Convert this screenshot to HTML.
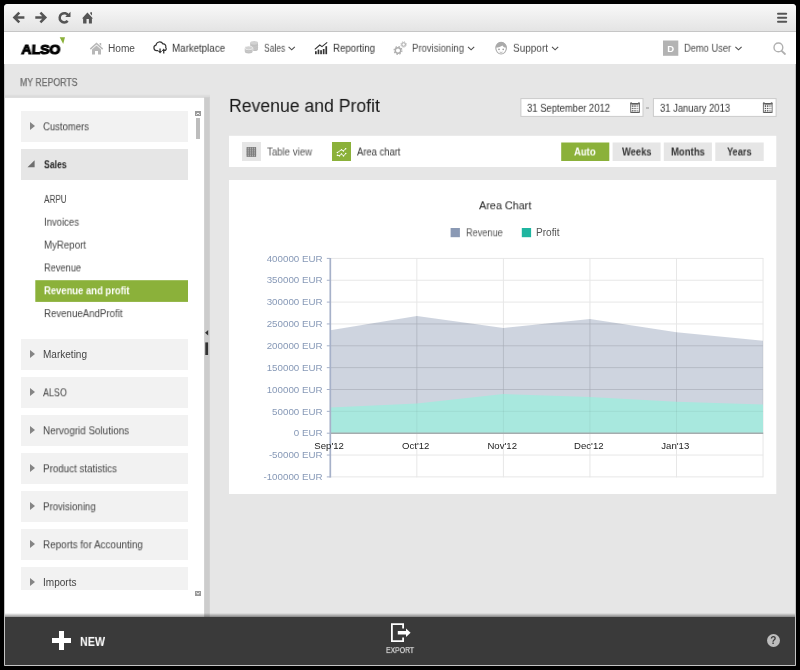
<!DOCTYPE html>
<html>
<head>
<meta charset="utf-8">
<title>Revenue and Profit</title>
<style>
*{box-sizing:border-box;margin:0;padding:0}
html,body{width:800px;height:670px;overflow:hidden;background:#000;font-family:"Liberation Sans",sans-serif;}
.abs{position:absolute}
svg text{font-family:"Liberation Sans",sans-serif}
.t{will-change:transform;position:absolute;white-space:nowrap;line-height:20px;height:20px;transform-origin:0 50%}
#bg{position:absolute;left:4px;top:4px;width:792px;height:662px;background:#e6e6e6;border-radius:3.5px 3.5px 0 0;border:1px solid #c4c4c4}
#chrome{position:absolute;left:4px;top:4px;width:792px;height:28px;background:linear-gradient(#f8f8f8,#e4e4e4);border-bottom:1px solid #c6c6c6;border-radius:3.5px 3.5px 0 0}
#nav{position:absolute;left:4px;top:32px;width:792px;height:32px;background:#fff}
#side{position:absolute;left:5px;top:97.7px;width:199.2px;height:519.3px;background:#fff}
#split{position:absolute;left:204.2px;top:97.7px;width:5.6px;height:519.3px;background:#ccc}
.it{position:absolute;left:21px;width:167px;height:31px;background:#f2f2f2}
.it:before{content:"";position:absolute;left:9.2px;top:11.1px;border-left:5px solid #858585;border-top:4.5px solid transparent;border-bottom:4.5px solid transparent}
#foot{position:absolute;left:5px;top:617px;width:790px;height:48px;background:#3a3a3a}
.btn{position:absolute;top:142.4px;height:18.6px;width:48.1px;background:#e6e6e6}
.date{position:absolute;top:98px;height:18.7px;background:#fff;border:1px solid #cdcdcd}
</style>
</head>
<body>
<div id="bg"></div>
<div id="chrome"></div>
<div id="nav"></div>
<!-- chrome icons -->
<svg class="abs" style="left:4px;top:4px" width="792" height="28" viewBox="4 4 792 28">
 <g stroke="#555" stroke-width="2.5" fill="none" stroke-linecap="butt" stroke-linejoin="miter">
  <path d="M24.4 17.5 H15 M19.3 12.6 L14.4 17.5 L19.3 22.4"/>
  <path d="M35.3 17.5 H44.6 M40.4 12.6 L45.3 17.5 L40.4 22.4"/>
  <path d="M68.3 15.6 A4.6 4.6 0 1 0 67.7 20.9"/>
 </g>
 <path d="M70.5 11.8 V16.9 H65.2 Z" fill="#555"/>
 <path d="M87.4 12.4 L93 18.5 H91.9 V23.6 H88.9 V19 H86.5 V23.6 H83.1 V18.5 H82 Z M90.3 12.3 H92 V15.6 L90.3 13.8 Z" fill="#555"/>
 <g stroke="#555" stroke-width="2" stroke-linecap="round">
  <path d="M778 13.75 H786.2 M778 17.75 H786.2 M778 21.75 H786.2"/>
 </g>
</svg>
<!-- logo -->
<div class="abs" style="left:21.2px;top:40.6px;font-size:13.6px;font-weight:bold;color:#000;line-height:18px;-webkit-text-stroke:1.1px #000;transform:skewX(-3deg) scaleX(1.03);transform-origin:0 100%;letter-spacing:0px;will-change:transform">ALSO</div>
<svg class="abs" style="left:59px;top:37px" width="7" height="8" viewBox="0 0 7 8"><path d="M0.7 0.2 H6 L4.2 7 Z" fill="#8bb13a"/></svg>
<!-- nav icons -->
<svg class="abs" style="left:4px;top:32px" width="792" height="32" viewBox="4 32 792 32">
 <!-- home -->
 <path d="M96.5 42.6 L103.2 48.6 L102.2 49.7 L96.5 44.6 L90.8 49.7 L89.8 48.6 Z M92 49.4 L96.5 45.4 L101 49.4 V54.5 H98 V51 H95 V54.5 H92 Z M99.6 43 H101.2 V46 L99.6 44.6 Z" fill="#b8b8b8"/>
 <!-- cloud -->
 <path d="M157.9 50.6 H156.6 A2.8 2.8 0 0 1 156 45.1 A3.7 3.7 0 0 1 162.9 43.9 A2.6 2.6 0 0 1 165.7 47.4 A2 2 0 0 1 165.5 50.3" fill="none" stroke="#333" stroke-width="1.2" stroke-linecap="round"/>
 <path d="M159.4 48.4 H160.7 V51 H162.1 L160.05 53.5 L158 51 H159.4 Z M163.1 53.5 V51 H161.7 L163.75 48.5 L165.8 51 H164.4 V53.5 Z" fill="#333"/>
 <!-- coins -->
 <path d="M250.2 42.8 V49.2 A3.9 1.9 0 0 0 258 49.2 V42.8 Z" fill="#c0c0c0"/>
 <ellipse cx="254.1" cy="42.8" rx="3.9" ry="1.9" fill="#d2d2d2"/>
 <path d="M250.2 45.4 A3.9 1.9 0 0 0 258 45.4 M250.2 47.4 A3.9 1.9 0 0 0 258 47.4" stroke="#d0d0d0" stroke-width="0.5" fill="none"/>
 <path d="M244.2 47.8 V51.6 A4.4 2.1 0 0 0 253.2 51.6 V47.8 Z" fill="#fff"/>
 <path d="M244.8 47.9 V51.6 A3.9 1.9 0 0 0 252.6 51.6 V47.9 Z" fill="#c0c0c0"/>
 <ellipse cx="248.7" cy="47.9" rx="3.9" ry="1.9" fill="#d2d2d2" stroke="#fff" stroke-width="0.5"/>
 <path d="M244.8 49.8 A3.9 1.9 0 0 0 252.6 49.8" stroke="#d0d0d0" stroke-width="0.5" fill="none"/>
 <!-- reporting -->
 <g fill="#333">
  <rect x="315" y="51.2" width="1.7" height="3"/><rect x="317.6" y="49.6" width="1.7" height="4.6"/><rect x="320.2" y="50.2" width="1.7" height="4"/><rect x="322.8" y="49" width="1.7" height="5.2"/><rect x="325.4" y="46.2" width="1.7" height="8"/>
 </g>
 <path d="M314.8 49.4 L319.8 45 L322 46.6 L327.2 42.4" stroke="#333" stroke-width="1.1" fill="none"/>
 <!-- gears -->
 <g fill="none" stroke="#adadad">
  <circle cx="398" cy="50.5" r="2.7" stroke-width="1.4"/>
  <circle cx="398" cy="50.5" r="3.9" stroke-width="1.2" stroke-dasharray="1.53 1.53"/>
  <circle cx="403.6" cy="44.5" r="1.8" stroke-width="1.1"/>
  <circle cx="403.6" cy="44.5" r="2.7" stroke-width="0.9" stroke-dasharray="1.06 1.06"/>
 </g>
 <!-- support -->
 <path d="M495.8 48 A5.3 5.6 0 0 1 506.4 48 A5.3 6 0 0 1 495.8 48 Z" fill="#fff" stroke="#aaa" stroke-width="1.1"/>
 <path d="M495.6 47.6 A5.5 5.6 0 0 1 506.6 47.6 L506 47.6 C504 47.4 503 46.4 502.4 45.4 C501 46.6 498.6 47.4 495.6 47.6 Z" fill="#aaa"/>
 <circle cx="499" cy="49.4" r="0.8" fill="#999"/><circle cx="503.2" cy="49.4" r="0.8" fill="#999"/>
 <path d="M499.6 52 Q501.1 53 502.6 52" stroke="#aaa" stroke-width="0.8" fill="none"/>
 <!-- chevrons -->
 <g fill="none" stroke="#505050" stroke-width="1.15">
  <path d="M288.6 46.8 L291.7 49.8 L294.8 46.8"/>
  <path d="M468 46.8 L471.1 49.8 L474.2 46.8"/>
  <path d="M552 46.8 L555.1 49.8 L558.2 46.8"/>
  <path d="M735.4 46.8 L738.5 49.8 L741.6 46.8"/>
 </g>
 <!-- user -->
 <rect x="663" y="40.5" width="15.3" height="15.3" fill="#b3b3b3"/>
 <!-- search -->
 <circle cx="778.4" cy="47.4" r="4.4" fill="none" stroke="#b0b0b0" stroke-width="1.4"/>
 <path d="M781.6 50.8 L785 54" stroke="#b0b0b0" stroke-width="1.8" stroke-linecap="round"/>
</svg>
<div class="abs" style="left:663px;top:40.5px;width:15.3px;height:15.3px;line-height:15.3px;text-align:center;color:#fff;font-weight:bold;font-size:9.5px">D</div>

<svg class="abs" style="left:0;top:0" width="800" height="670" viewBox="0 0 800 670">
<rect x="5" y="97.7" width="199.2" height="519.3" fill="#fff" />
<rect x="204.2" y="97.7" width="5.6" height="519.3" fill="#ccc" />
<rect x="35.3" y="280.2" width="152.7" height="21.7" fill="#8bb13a" />
<rect x="205.3" y="342.4" width="2.8" height="12.6" fill="#333" />
<rect x="520.9" y="98.6" width="122.1" height="17.8" fill="#fff" stroke="#cbcbcb" stroke-width="1"/>
<rect x="653.4" y="98.6" width="122.7" height="17.8" fill="#fff" stroke="#cbcbcb" stroke-width="1"/>
<rect x="229" y="135.8" width="547.3" height="31.2" fill="#fff" />
<rect x="242" y="142" width="19" height="19" fill="#e6e6e6" />
<rect x="332" y="142" width="19" height="19" fill="#8bb13a" />
<rect x="561.2" y="142.5" width="48.1" height="18.5" fill="#8bb13a" />
<rect x="612.6" y="142.5" width="48.0" height="18.5" fill="#e6e6e6" />
<rect x="663.8" y="142.5" width="48.1" height="18.5" fill="#e6e6e6" />
<rect x="715.3" y="142.5" width="48.4" height="18.5" fill="#e6e6e6" />
<rect x="229" y="180" width="547.3" height="314" fill="#fff" />
<rect x="450.6" y="228" width="9.3" height="9.2" fill="#8a99b4" />
<rect x="521.8" y="228" width="9.3" height="9.2" fill="#1fb5a0" />
</svg>
<!-- sidebar items -->
<div class="it" style="top:111px"></div>
<div class="abs" style="left:21px;top:149px;width:167px;height:31px;background:#e6e6e6"></div>
<svg class="abs" style="left:27px;top:160px" width="8" height="8" viewBox="0 0 8 8"><path d="M7.6 0.3 V7.2 H0.5 Z" fill="#6e6e6e"/></svg>
<div class="it" style="top:339px"></div>
<div class="it" style="top:377px"></div>
<div class="it" style="top:415px"></div>
<div class="it" style="top:453px"></div>
<div class="it" style="top:491px"></div>
<div class="it" style="top:529px"></div>
<div class="it" style="top:567px;height:23px"></div>
<!-- scrollbar -->
<div class="abs" style="left:195px;top:111px;width:6px;height:5px;background:#999"></div>
<svg class="abs" style="left:195px;top:111px" width="6" height="5" viewBox="0 0 6 5"><path d="M1.2 3.6 L3 2 L4.8 3.6" stroke="#fff" stroke-width="1" fill="none"/></svg>
<div class="abs" style="left:196px;top:118px;width:4px;height:21px;background:#bdbdbd"></div>
<div class="abs" style="left:195px;top:591px;width:6px;height:5px;background:#999"></div>
<svg class="abs" style="left:195px;top:591px" width="6" height="5" viewBox="0 0 6 5"><path d="M1.2 1.6 L3 3.2 L4.8 1.6" stroke="#fff" stroke-width="1" fill="none"/></svg>
<!-- splitter handle -->
<svg class="abs" style="left:205px;top:330px" width="4" height="6" viewBox="0 0 4 6"><path d="M3.2 0 L3.2 5.4 L0 2.7 Z" fill="#333"/></svg>

<!-- main -->
<div class="abs" style="left:646.3px;top:107.2px;width:2.8px;height:1.5px;background:#bcbcbc"></div>
<!-- toolbar -->
<!-- chart panel -->
<svg class="abs" style="left:229px;top:180px" width="547" height="314" viewBox="229 180 547 314">
<path d="M330 258.40 H763.2" stroke="#e7e7e7" stroke-width="1"/>
<path d="M330 280.25 H763.2" stroke="#e7e7e7" stroke-width="1"/>
<path d="M330 302.10 H763.2" stroke="#e7e7e7" stroke-width="1"/>
<path d="M330 323.95 H763.2" stroke="#e7e7e7" stroke-width="1"/>
<path d="M330 345.80 H763.2" stroke="#e7e7e7" stroke-width="1"/>
<path d="M330 367.65 H763.2" stroke="#e7e7e7" stroke-width="1"/>
<path d="M330 389.50 H763.2" stroke="#e7e7e7" stroke-width="1"/>
<path d="M330 411.35 H763.2" stroke="#e7e7e7" stroke-width="1"/>
<path d="M330 433.20 H763.2" stroke="#e7e7e7" stroke-width="1"/>
<path d="M330 455.05 H763.2" stroke="#e7e7e7" stroke-width="1"/>
<path d="M330 476.90 H763.2" stroke="#e7e7e7" stroke-width="1"/>
<path d="M416.85 258 V477.3" stroke="#e7e7e7" stroke-width="1"/>
<path d="M503.40 258 V477.3" stroke="#e7e7e7" stroke-width="1"/>
<path d="M589.95 258 V477.3" stroke="#e7e7e7" stroke-width="1"/>
<path d="M676.50 258 V477.3" stroke="#e7e7e7" stroke-width="1"/>
<path d="M763.05 258 V477.3" stroke="#e7e7e7" stroke-width="1"/>
<clipPath id="rc"><polygon points="330.3,330.3 416.9,316.1 503.4,327.9 590.0,319.1 676.5,332.3 763.0,340.8 763.0,433.2 330.3,433.2"/></clipPath>
<polygon points="330.3,330.3 416.9,316.1 503.4,327.9 590.0,319.1 676.5,332.3 763.0,340.8 763.0,433.2 330.3,433.2" fill="#8494b0" fill-opacity="0.4"/>
<polygon points="330.3,407.4 416.9,403.5 503.4,394.1 590.0,397.1 676.5,401.7 763.0,404.4 763.0,433.2 330.3,433.2" fill="#a8e8de"/>
<g clip-path="url(#rc)">
<path d="M330 323.95 H763.2" stroke="#000" stroke-opacity="0.05" stroke-width="1"/>
<path d="M330 345.80 H763.2" stroke="#000" stroke-opacity="0.05" stroke-width="1"/>
<path d="M330 367.65 H763.2" stroke="#000" stroke-opacity="0.05" stroke-width="1"/>
<path d="M330 389.50 H763.2" stroke="#000" stroke-opacity="0.05" stroke-width="1"/>
<path d="M330 411.35 H763.2" stroke="#000" stroke-opacity="0.05" stroke-width="1"/>
<path d="M416.85 300 V433" stroke="#000" stroke-opacity="0.05" stroke-width="1"/>
<path d="M503.40 300 V433" stroke="#000" stroke-opacity="0.05" stroke-width="1"/>
<path d="M589.95 300 V433" stroke="#000" stroke-opacity="0.05" stroke-width="1"/>
<path d="M676.50 300 V433" stroke="#000" stroke-opacity="0.05" stroke-width="1"/>
</g>
<path d="M330 433.20 H763.2" stroke="#a5acae" stroke-width="1.4"/>
<path d="M330.3 258 V477.6" stroke="#a6b1c9" stroke-width="1.7"/>
<path d="M326.8 258.40 H330" stroke="#a6b1c9" stroke-width="1"/>
<path d="M326.8 280.25 H330" stroke="#a6b1c9" stroke-width="1"/>
<path d="M326.8 302.10 H330" stroke="#a6b1c9" stroke-width="1"/>
<path d="M326.8 323.95 H330" stroke="#a6b1c9" stroke-width="1"/>
<path d="M326.8 345.80 H330" stroke="#a6b1c9" stroke-width="1"/>
<path d="M326.8 367.65 H330" stroke="#a6b1c9" stroke-width="1"/>
<path d="M326.8 389.50 H330" stroke="#a6b1c9" stroke-width="1"/>
<path d="M326.8 411.35 H330" stroke="#a6b1c9" stroke-width="1"/>
<path d="M326.8 433.20 H330" stroke="#a6b1c9" stroke-width="1"/>
<path d="M326.8 455.05 H330" stroke="#a6b1c9" stroke-width="1"/>
<path d="M326.8 476.90 H330" stroke="#a6b1c9" stroke-width="1"/>
<text transform="translate(322.5,261.6) scale(0.975,0.97)" text-anchor="end" font-size="10" fill="#8799b7">400000 EUR</text>
<text transform="translate(322.5,283.4) scale(0.975,0.97)" text-anchor="end" font-size="10" fill="#8799b7">350000 EUR</text>
<text transform="translate(322.5,305.3) scale(0.975,0.97)" text-anchor="end" font-size="10" fill="#8799b7">300000 EUR</text>
<text transform="translate(322.5,327.1) scale(0.975,0.97)" text-anchor="end" font-size="10" fill="#8799b7">250000 EUR</text>
<text transform="translate(322.5,349.0) scale(0.975,0.97)" text-anchor="end" font-size="10" fill="#8799b7">200000 EUR</text>
<text transform="translate(322.5,370.8) scale(0.975,0.97)" text-anchor="end" font-size="10" fill="#8799b7">150000 EUR</text>
<text transform="translate(322.5,392.7) scale(0.975,0.97)" text-anchor="end" font-size="10" fill="#8799b7">100000 EUR</text>
<text transform="translate(322.5,414.6) scale(0.975,0.97)" text-anchor="end" font-size="10" fill="#8799b7">50000 EUR</text>
<text transform="translate(322.5,436.4) scale(0.975,0.97)" text-anchor="end" font-size="10" fill="#8799b7">0 EUR</text>
<text transform="translate(322.5,458.2) scale(0.975,0.97)" text-anchor="end" font-size="10" fill="#8799b7">-50000 EUR</text>
<text transform="translate(322.5,480.1) scale(0.975,0.97)" text-anchor="end" font-size="10" fill="#8799b7">-100000 EUR</text>
<text transform="translate(329.1,449.2) scale(0.96,0.98)" text-anchor="middle" font-size="10" fill="#222">Sep'12</text>
<text transform="translate(415.7,449.2) scale(0.96,0.98)" text-anchor="middle" font-size="10" fill="#222">Oct'12</text>
<text transform="translate(502.2,449.2) scale(0.96,0.98)" text-anchor="middle" font-size="10" fill="#222">Nov'12</text>
<text transform="translate(588.8,449.2) scale(0.96,0.98)" text-anchor="middle" font-size="10" fill="#222">Dec'12</text>
<text transform="translate(675.3,449.2) scale(0.96,0.98)" text-anchor="middle" font-size="10" fill="#222">Jan'13</text>
</svg>
<svg class="abs" style="left:229px;top:96px" width="550" height="70" viewBox="229 96 550 70">
<g transform="translate(630.2,102)"><rect x="0.5" y="1.6" width="8.7" height="8.8" fill="#e4e4e4" stroke="#6e6e6e" stroke-width="1"/><rect x="0" y="0.2" width="1.9" height="2.2" rx="0.8" fill="#666"/><rect x="7.8" y="0.2" width="1.9" height="2.2" rx="0.8" fill="#666"/><path d="M1.8 1.9 H7.9" stroke="#555" stroke-width="1.3"/><path d="M1 10.4 H8.7" stroke="#555" stroke-width="0.9"/><path d="M3.7 3 V10 M5.9 3 V10 M1 5.4 H8.7 M1 7.6 H8.7" stroke="#fff" stroke-width="0.8"/><rect x="2.0" y="3.3" width="1.2" height="1.6" fill="#555"/><rect x="2.0" y="5.9" width="1.2" height="1.2" fill="#555"/><rect x="2.0" y="8.1" width="1.2" height="1.2" fill="#555"/><rect x="4.2" y="3.3" width="1.2" height="1.6" fill="#555"/><rect x="4.2" y="5.9" width="1.2" height="1.2" fill="#555"/><rect x="4.2" y="8.1" width="1.2" height="1.2" fill="#555"/><rect x="6.4" y="3.3" width="1.2" height="1.6" fill="#999"/><rect x="6.4" y="5.9" width="1.2" height="1.2" fill="#999"/><rect x="6.4" y="8.1" width="1.2" height="1.2" fill="#999"/></g><g transform="translate(762.9,102)"><rect x="0.5" y="1.6" width="8.7" height="8.8" fill="#e4e4e4" stroke="#6e6e6e" stroke-width="1"/><rect x="0" y="0.2" width="1.9" height="2.2" rx="0.8" fill="#666"/><rect x="7.8" y="0.2" width="1.9" height="2.2" rx="0.8" fill="#666"/><path d="M1.8 1.9 H7.9" stroke="#555" stroke-width="1.3"/><path d="M1 10.4 H8.7" stroke="#555" stroke-width="0.9"/><path d="M3.7 3 V10 M5.9 3 V10 M1 5.4 H8.7 M1 7.6 H8.7" stroke="#fff" stroke-width="0.8"/><rect x="2.0" y="3.3" width="1.2" height="1.6" fill="#555"/><rect x="2.0" y="5.9" width="1.2" height="1.2" fill="#555"/><rect x="2.0" y="8.1" width="1.2" height="1.2" fill="#555"/><rect x="4.2" y="3.3" width="1.2" height="1.6" fill="#555"/><rect x="4.2" y="5.9" width="1.2" height="1.2" fill="#555"/><rect x="4.2" y="8.1" width="1.2" height="1.2" fill="#555"/><rect x="6.4" y="3.3" width="1.2" height="1.6" fill="#999"/><rect x="6.4" y="5.9" width="1.2" height="1.2" fill="#999"/><rect x="6.4" y="8.1" width="1.2" height="1.2" fill="#999"/></g>
 <!-- table icon -->
 <rect x="246.6" y="147" width="9.5" height="9.9" fill="#7d7d7d"/>
 <g stroke="#d8d8d8" stroke-width="0.9" stroke-opacity="0.75">
  <path d="M248.3 147.6 V156.3 M250.4 147.6 V156.3 M252.4 147.6 V156.3 M254.4 147.6 V156.3"/>
 </g>
 <g stroke="#7d7d7d" stroke-width="0.8" stroke-opacity="0.85">
  <path d="M246.6 149.3 H256.1 M246.6 151.2 H256.1 M246.6 153 H256.1 M246.6 154.7 H256.1"/>
 </g>
 <!-- area icon -->
 <g fill="none" stroke="#fff" stroke-width="0.9" stroke-opacity="0.95">
  <path d="M337.4 152.6 L341.5 149.7 L343.4 151 L345.6 148.7"/>
  <path d="M337.4 155.2 L339.5 155.8 L341.5 153.9 L343.5 156 L345.7 153.5"/>
 </g>
 <g fill="#fff">
  <circle cx="337.4" cy="152.6" r="0.75"/><circle cx="341.5" cy="149.7" r="0.7"/><circle cx="343.4" cy="151" r="0.7"/><circle cx="345.6" cy="148.7" r="0.75"/>
  <circle cx="337.4" cy="155.2" r="0.75"/><circle cx="339.5" cy="155.8" r="0.7"/><circle cx="341.5" cy="153.9" r="0.7"/><circle cx="343.5" cy="156" r="0.7"/><circle cx="345.7" cy="153.5" r="0.75"/>
 </g>
</svg>
<!--ICONS2-->
<div class="abs" style="left:5px;top:94px;width:205px;height:3.7px;background:linear-gradient(rgba(0,0,0,0),rgba(0,0,0,0.08))"></div>
<div class="abs" style="left:5px;top:612.8px;width:790px;height:4.3px;background:linear-gradient(rgba(0,0,0,0),rgba(0,0,0,0.42))"></div>
<div id="foot"></div>
<div class="abs" style="left:59px;top:631px;width:5px;height:19px;background:#fff"></div>
<div class="abs" style="left:52px;top:638px;width:19px;height:5px;background:#fff"></div>
<svg class="abs" style="left:388px;top:620px" width="26" height="24" viewBox="388 620 26 24">
 <path d="M403.1 628.6 V624.1 H391.9 V641.1 H403.1 V637.4" fill="none" stroke="#fff" stroke-width="1.8"/>
 <path d="M397.8 631 H406 V628.4 L410.6 632.7 L406 637 V634.5 H397.8 Z" fill="#fff"/>
</svg>
<div class="abs" style="left:766.8px;top:634.2px;width:13px;height:13px;border-radius:50%;background:#bdbdbd;color:#3a3a3a;font-weight:bold;font-size:10px;line-height:14.6px;text-align:center">?</div>
<div class="t" style="left:108.00px;top:38px;font-size:10px;color:#4c4c4c;font-weight:normal;transform:translateY(0.80px) scaleX(1.0117);">Home</div>
<div class="t" style="left:172.00px;top:38px;font-size:10px;color:#333;font-weight:normal;transform:translateY(0.80px) scaleX(0.9730);">Marketplace</div>
<div class="t" style="left:264.00px;top:38px;font-size:10px;color:#4c4c4c;font-weight:normal;transform:translateY(0.80px) scaleX(0.8495);">Sales</div>
<div class="t" style="left:333.25px;top:38px;font-size:10px;color:#333;font-weight:normal;transform:translateY(0.80px) scaleX(0.9686);">Reporting</div>
<div class="t" style="left:412.00px;top:38px;font-size:10px;color:#4c4c4c;font-weight:normal;transform:translateY(0.80px) scaleX(0.9544);">Provisioning</div>
<div class="t" style="left:513.00px;top:38px;font-size:10px;color:#4c4c4c;font-weight:normal;transform:translateY(0.80px) scaleX(0.9991);">Support</div>
<div class="t" style="left:684.00px;top:38px;font-size:10px;color:#4c4c4c;font-weight:normal;transform:translateY(0.80px) scaleX(0.9293);">Demo User</div>
<div class="t" style="left:20.00px;top:73px;font-size:10px;color:#6e6e6e;font-weight:normal;transform:translateY(0.00px) scaleX(0.8743);-webkit-text-stroke:0.25px #6e6e6e;">MY REPORTS</div>
<div class="t" style="left:43.40px;top:117px;font-size:10px;color:#444;font-weight:normal;transform:translateY(0.30px) scaleX(0.9512);">Customers</div>
<div class="t" style="left:43.60px;top:155px;font-size:10px;color:#222;font-weight:bold;transform:translateY(0.20px) scaleX(0.8684);">Sales</div>
<div class="t" style="left:44.40px;top:189px;font-size:10px;color:#444;font-weight:normal;transform:translateY(0.90px) scaleX(0.8166);">ARPU</div>
<div class="t" style="left:44.40px;top:212px;font-size:10px;color:#444;font-weight:normal;transform:translateY(0.74px) scaleX(0.9540);">Invoices</div>
<div class="t" style="left:44.40px;top:235px;font-size:10px;color:#444;font-weight:normal;transform:translateY(0.58px) scaleX(0.9686);">MyReport</div>
<div class="t" style="left:44.40px;top:258px;font-size:10px;color:#444;font-weight:normal;transform:translateY(0.42px) scaleX(0.9243);">Revenue</div>
<div class="t" style="left:44.40px;top:281px;font-size:10px;color:#fff;font-weight:bold;transform:translateY(0.26px) scaleX(0.9439);">Revenue and profit</div>
<div class="t" style="left:44.40px;top:304px;font-size:10px;color:#444;font-weight:normal;transform:translateY(0.10px) scaleX(0.9671);">RevenueAndProfit</div>
<div class="t" style="left:43.40px;top:345px;font-size:10px;color:#444;font-weight:normal;transform:translateY(0.30px) scaleX(1.0021);">Marketing</div>
<div class="t" style="left:43.40px;top:383px;font-size:10px;color:#444;font-weight:normal;transform:translateY(0.30px) scaleX(0.8918);">ALSO</div>
<div class="t" style="left:43.40px;top:421px;font-size:10px;color:#444;font-weight:normal;transform:translateY(0.30px) scaleX(0.9855);">Nervogrid Solutions</div>
<div class="t" style="left:43.40px;top:459px;font-size:10px;color:#444;font-weight:normal;transform:translateY(0.30px) scaleX(0.9789);">Product statistics</div>
<div class="t" style="left:43.40px;top:497px;font-size:10px;color:#444;font-weight:normal;transform:translateY(0.30px) scaleX(0.9672);">Provisioning</div>
<div class="t" style="left:43.40px;top:535px;font-size:10px;color:#444;font-weight:normal;transform:translateY(0.30px) scaleX(0.9874);">Reports for Accounting</div>
<div class="t" style="left:43.40px;top:573px;font-size:10px;color:#444;font-weight:normal;transform:translateY(0.30px) scaleX(1.0047);">Imports</div>
<div class="t" style="left:229.00px;top:95px;font-size:18px;color:#161616;font-weight:normal;transform:translateY(0.90px) scaleX(0.9798);">Revenue and Profit</div>
<div class="t" style="left:527.00px;top:98px;font-size:10px;color:#333;font-weight:normal;transform:translateY(0.80px) scaleX(0.9449);">31 September 2012</div>
<div class="t" style="left:659.80px;top:98px;font-size:10px;color:#333;font-weight:normal;transform:translateY(0.80px) scaleX(0.9394);">31 January 2013</div>
<div class="t" style="left:267.10px;top:142px;font-size:10px;color:#555;font-weight:normal;transform:translateY(0.50px) scaleX(0.9635);">Table view</div>
<div class="t" style="left:357.00px;top:142px;font-size:10px;color:#333;font-weight:normal;transform:translateY(0.50px) scaleX(0.9406);">Area chart</div>
<div class="t" style="left:574.40px;top:142px;font-size:10px;color:#fff;font-weight:bold;transform:translateY(0.50px) scaleX(0.9481);">Auto</div>
<div class="t" style="left:621.85px;top:142px;font-size:10px;color:#333;font-weight:bold;transform:translateY(0.50px) scaleX(0.9360);">Weeks</div>
<div class="t" style="left:671.00px;top:142px;font-size:10px;color:#333;font-weight:bold;transform:translateY(0.50px) scaleX(0.9509);">Months</div>
<div class="t" style="left:727.15px;top:142px;font-size:10px;color:#333;font-weight:bold;transform:translateY(0.50px) scaleX(0.9175);">Years</div>
<div class="t" style="left:478.70px;top:195px;font-size:11.5px;color:#222;font-weight:normal;transform:translateY(0.30px) scaleX(0.9405);">Area Chart</div>
<div class="t" style="left:465.60px;top:223px;font-size:10px;color:#555;font-weight:normal;transform:translateY(0.30px) scaleX(0.9168);">Revenue</div>
<div class="t" style="left:536.40px;top:223px;font-size:10px;color:#555;font-weight:normal;transform:translateY(0.30px) scaleX(1.0110);">Profit</div>
<div class="t" style="left:80.00px;top:631px;font-size:12px;color:#fff;font-weight:bold;transform:translateY(0.90px) scaleX(0.8929);">NEW</div>
<div class="t" style="left:385.80px;top:640px;font-size:8.7px;color:#ddd;font-weight:normal;transform:translateY(0.10px) scaleX(0.7870);-webkit-text-stroke:0.2px #ddd;">EXPORT</div>
</body>
</html>
